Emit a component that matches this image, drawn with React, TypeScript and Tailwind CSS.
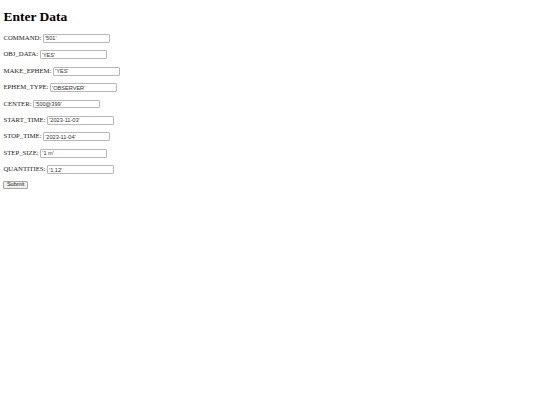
import React from 'react';

const fields: [string, string][] = [
  ['COMMAND', "'501'"],
  ['OBJ_DATA', "'YES'"],
  ['MAKE_EPHEM', "'YES'"],
  ['EPHEM_TYPE', "'OBSERVER'"],
  ['CENTER', "'500@399'"],
  ['START_TIME', "'2023-11-03'"],
  ['STOP_TIME', "'2023-11-04'"],
  ['STEP_SIZE', "'1 m'"],
  ['QUANTITIES', "'1,12'"],
];

export default function App() {
  return (
    <div className="min-h-[405px] w-[540px] bg-white px-[3.4px] pt-[9.05px] text-black font-['Liberation_Serif',serif]">
      <h1 className="text-[13.5px] font-bold leading-[15.5px]">Enter Data</h1>
      <form className="mt-[9.05px] flex flex-col gap-[6.75px]" onSubmit={e => e.preventDefault()}>
        {fields.map(([name, value]) => (
          <p key={name} className="flex h-[9.65px] items-center text-[6.75px] leading-none text-[#222]">
            <span>{name}:</span>
            <input
              type="text"
              name={name}
              defaultValue={value}
              className="ml-[1.7px] h-[8.9px] w-[67px] rounded-[1px] border border-[#b8b8b8] bg-white px-[1px] text-[5.6px] font-['Liberation_Sans',sans-serif] leading-none text-[#333] outline-none"
            />
          </p>
        ))}
        <div className="flex">
          <button
            type="submit"
            className="h-[7.6px] rounded-[1px] border border-[#a6a6a6] bg-[#efefef] px-[2.5px] text-[5.6px] font-['Liberation_Sans',sans-serif] leading-none text-[#222]"
          >
            Submit
          </button>
        </div>
      </form>
    </div>
  );
}
